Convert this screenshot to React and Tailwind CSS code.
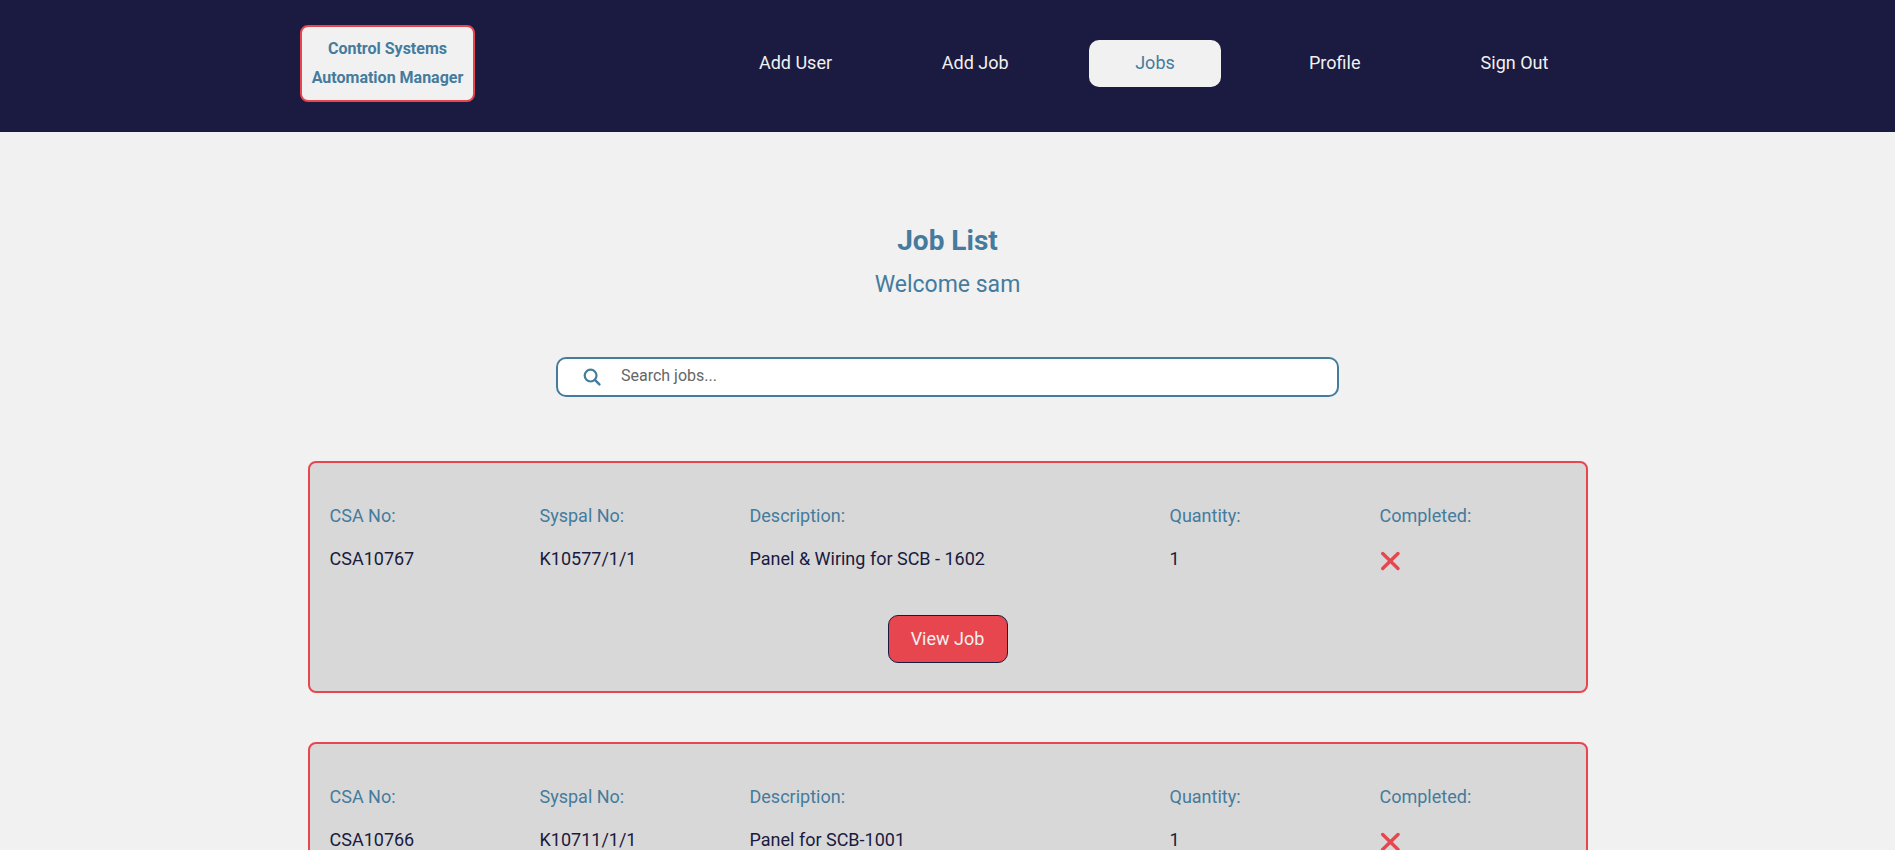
import React from "react";

const navItems = ["Add User", "Add Job", "Jobs", "Profile", "Sign Out"];
const jobs = [
  { csa: "CSA10767", syspal: "K10577/1/1", description: "Panel & Wiring for SCB - 1602", quantity: "1" },
  { csa: "CSA10766", syspal: "K10711/1/1", description: "Panel for SCB-1001", quantity: "1" },
];

function Cross() {
  return (
    <svg width="21" height="20" viewBox="0 0 21 20" className="mt-[2px] block" aria-hidden="true">
      <path d="M2.7 2.5 L18 17.5 M18 2.5 L2.7 17.5" stroke="#e8464e" strokeWidth="3.4" strokeLinecap="round" fill="none" />
    </svg>
  );
}

function SearchIcon() {
  return (
    <svg width="18" height="18" viewBox="0 0 18 18" className="block" aria-hidden="true">
      <circle cx="7.6" cy="7.6" r="5.9" stroke="#457b9d" strokeWidth="2.2" fill="none" />
      <path d="M11.9 11.9 L16.4 16.4" stroke="#457b9d" strokeWidth="2.4" strokeLinecap="round" fill="none" />
    </svg>
  );
}

function JobCard({ job }) {
  return (
    <div className="rounded-[8px] border-2 border-[#e8464e] bg-[#d8d8d8] px-5 pt-[43px] pb-[28px]">
      <div className="grid grid-cols-6 gap-x-6 text-lg leading-[19px]">
        <div className="text-[#457b9d]">CSA No:</div>
        <div className="text-[#457b9d]">Syspal No:</div>
        <div className="col-span-2 text-[#457b9d]">Description:</div>
        <div className="text-[#457b9d]">Quantity:</div>
        <div className="text-[#457b9d]">Completed:</div>
        <div className="mt-[24px] text-[#1a1a40]">{job.csa}</div>
        <div className="mt-[24px] text-[#1a1a40]">{job.syspal}</div>
        <div className="col-span-2 mt-[24px] text-[#1a1a40]">{job.description}</div>
        <div className="mt-[24px] text-[#1a1a40]">{job.quantity}</div>
        <div className="mt-[24px]"><Cross /></div>
      </div>
      <div className="mt-[44px] flex justify-center">
        <button className="h-[48px] w-[120px] rounded-[10px] border border-[#1a1a40] bg-[#e8464e] text-lg text-[#f1f1f1]">
          View Job
        </button>
      </div>
    </div>
  );
}

export default function App() {
  return (
    <div className="h-screen overflow-hidden bg-[#f1f1f1] font-['Roboto',sans-serif]">
      <header className="flex h-[132px] items-start bg-[#1b1a40] pl-[300px] pr-[314px]">
        <div className="mt-[25px] flex h-[77px] w-[175px] flex-col items-center justify-center rounded-[8px] border-2 border-[#e8464e] bg-[#f1f1f1] pb-[2px] text-center text-base leading-[29px] font-bold whitespace-nowrap text-[#457b9d]">
          <div>Control Systems</div>
          <div>Automation Manager</div>
        </div>
        <nav className="mt-[40px] ml-[254.5px] flex gap-[47.75px]">
          {navItems.map((item) => (
            <a
              key={item}
              className={
                item === "Jobs"
                  ? "flex h-[47px] w-[132px] items-center justify-center rounded-[10px] bg-[#f1f1f1] pb-[2px] text-lg text-[#457b9d]"
                  : "flex h-[47px] w-[132px] items-center justify-center rounded-[10px] pb-[2px] text-lg text-[#f1f1f1]"
              }
            >
              {item}
            </a>
          ))}
        </nav>
      </header>
      <main className="flex flex-col items-center">
        <h1 className="mt-[94px] text-center text-[28px] leading-[30px] font-bold text-[#457b9d]">Job List</h1>
        <h2 className="mt-[16px] text-center text-[23px] leading-[26px] text-[#457b9d]">Welcome sam</h2>
        <div className="mt-[59px] flex h-[40px] w-[783px] items-center rounded-[10px] border-2 border-[#457b9d] bg-white pl-[25px]">
          <SearchIcon />
          <span className="ml-[20px] pb-[2px] text-base text-[#666666]">Search jobs...</span>
        </div>
        <div className="mt-[64px] flex w-[1280px] flex-col gap-[49px]">
          {jobs.map((job) => (
            <JobCard key={job.csa} job={job} />
          ))}
        </div>
      </main>
    </div>
  );
}
